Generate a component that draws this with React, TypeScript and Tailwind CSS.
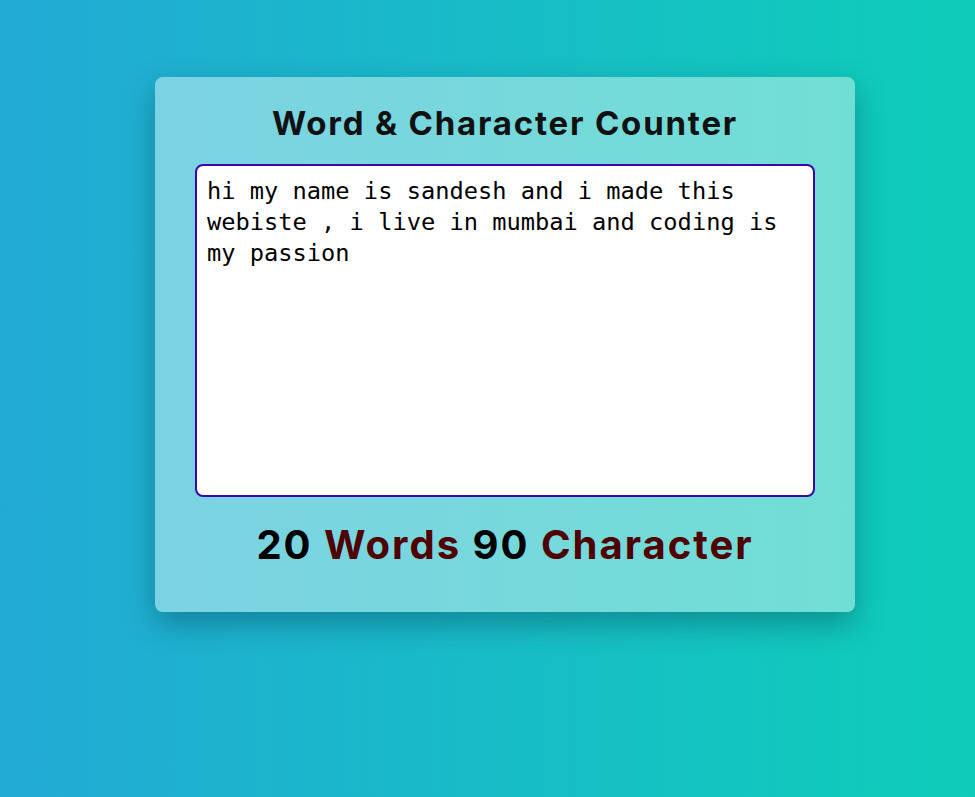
import React, { useState } from "react";

export default function App() {
  const [text, setText] = useState(
    "hi my name is sandesh and i made this webiste , i live in mumbai and coding is my passion"
  );
  return (
    <div className="min-h-[797px] w-full bg-gradient-to-r from-[#22aad5] to-[#0ecdb8] flex justify-center items-start pl-[35px] pt-[77px]">
      <div className="w-[700px] h-[535px] rounded-lg bg-gradient-to-r from-[#7bd2e3] to-[#71ded4] shadow-[0_12px_30px_rgba(0,40,60,0.35)] flex flex-col items-center pt-[22px] px-[40px]">
        <h1 className="text-[33px] leading-[48px] font-bold text-[#111] font-['Inter',sans-serif] tracking-[1.8px] whitespace-nowrap">
          Word &amp; Character Counter
        </h1>
        <textarea
          value={text}
          onChange={(e) => setText(e.target.value)}
          className="mt-[17px] w-[620px] h-[333px] bg-white border-2 border-[#3a08a8] rounded-lg px-[10px] py-[10px] text-[23.7px] leading-[31px] text-black font-['DejaVu_Sans_Mono',monospace] resize-none outline-none"
        />
        <div className="mt-[18px] text-[40px] leading-[60px] font-bold font-['Inter',sans-serif] tracking-[2px] whitespace-nowrap">
          <span className="text-black">20</span>{" "}
          <span className="text-[#500000]">Words</span>{" "}
          <span className="text-black">90</span>{" "}
          <span className="text-[#500000]">Character</span>
        </div>
      </div>
    </div>
  );
}
